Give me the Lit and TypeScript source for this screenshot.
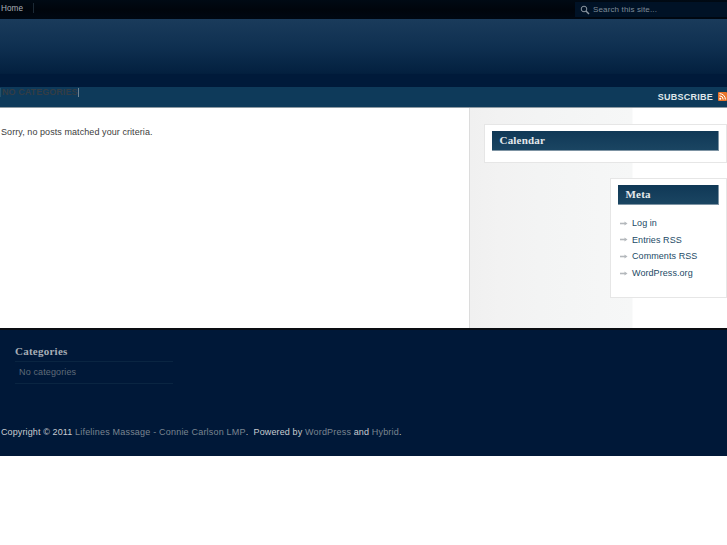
import { LitElement, html, css } from "lit";
import { customElement } from "lit/decorators.js";

@customElement("app-root")
export class AppRoot extends LitElement {
  static styles = css`
    :host { display: block; width: 727px; height: 545px; background: #fff; overflow: hidden; font-family: "Liberation Sans", Arial, sans-serif; font-size: 9px; letter-spacing: 0.07px; color: #444; }
    a { color: inherit; text-decoration: none; }
    .top { height: 19px; display: flex; justify-content: space-between; background: linear-gradient(#000a14, #00050c 50%, #000812); }
    .home { display: flex; align-items: center; padding-left: 1px; color: #a8b0b8; width: 34px; box-sizing: border-box; border-right: 1px solid #1c2a36; height: 10px; margin-top: 3px; font-size: 8.2px; }
    .search { width: 152px; height: 15px; margin-top: 2px; background: #001226; display: flex; align-items: center; gap: 3px; padding-left: 5px; box-sizing: border-box; color: #7f8c98; font-size: 8px; letter-spacing: 0.14px; }
    .head { height: 68px; background: linear-gradient(#1a3b5b, #0f3051 40%, #03203f 80%, #001a3a 81%, #001a3a); }
    .nav { height: 20px; background: #0e3a5a; border-bottom: 1px solid #8d9aa3; display: flex; justify-content: space-between; }
    .cats { margin-top: 1px; padding-left: 1px; height: 9px; line-height: 9px; font-size: 9px; font-weight: bold; letter-spacing: 0.05px; color: #333d45; border-right: 1px solid #6f8493; border-left: 1px solid #235069; align-self: flex-start; }
    .sub { display: flex; align-items: center; gap: 5px; color: #dfe6ea; font-weight: bold; font-size: 9px; letter-spacing: 0.25px; padding-bottom: 1px; }
    .main { height: 220px; display: flex; }
    .content { width: 469px; padding: 19px 0 0 1px; box-sizing: border-box; color: #3c3c3c; }
    .side { flex: 1; display: flex; flex-direction: column; align-items: flex-end; gap: 15px; padding-top: 16px; box-sizing: border-box;
      background: linear-gradient(90deg, #dcdcdc 0, #dcdcdc 1px, #f0f0f0 1px, #f2f2f2 30px, #f3f4f4 70px, #f6f7f7 163px, #fff 164px); }
    .w { background: #fff; border: 1px solid #e6e6e6; padding: 6px 7px; box-sizing: border-box; }
    .cal { width: 243px; height: 39px; }
    .meta { width: 117px; height: 120px; }
    .title { height: 20px; box-sizing: border-box; background: linear-gradient(#103856, #1a4562); border: 1px solid #7d93a3; border-width: 0 1px 1px 0; font: bold 11px "Liberation Serif", serif; color: #e4e9ec; padding: 2.5px 0 0 7.5px; letter-spacing: 0.2px; }
    ul { list-style: none; margin: 10px 0 0; padding: 0; color: #224a66; }
    li { height: 16.6px; display: flex; align-items: center; gap: 4px; padding-left: 2px; letter-spacing: 0.07px; }
    .foot { height: 128px; background: #001838; border-top: 2px solid #0a0d12; box-sizing: border-box; color: #c4c8cc; display: flex; flex-direction: column; }
    .fw { margin: 15px 0 0 15px; width: 158px; }
    .fw h3 { margin: 0; font: bold 11px "Liberation Serif", serif; color: #a6adb5; height: 16px; letter-spacing: 0.25px; border-bottom: 1px solid #0a2542; }
    .fw p { margin: 0; height: 21px; line-height: 21px; padding-left: 4px; color: #5f6b78; border-bottom: 1px solid #0a2542; letter-spacing: 0.13px; }
    .copy { margin: 43px 0 0 1px; letter-spacing: 0.12px; color: #c8ccd0; white-space: pre; }
    .copy a { color: #7a8590; letter-spacing: 0.2px; }
  `;
  render() {
    const arrow = html`<svg width="8" height="5" viewBox="0 0 8 5"><path d="M0 2.5h5" stroke="#b4b8bc" stroke-width="1.6"/><path d="M4.5 .5l3 2-3 2z" fill="#b4b8bc"/></svg>`;
    return html`
      <div class="top">
        <div class="home"><a href="#">Home</a></div>
        <div class="search">
          <svg width="10" height="10" viewBox="0 0 10 10" fill="none" stroke="#8b96a0"><circle cx="4" cy="4" r="2.8"/><path d="M6 6l3 3" stroke-width="1.4"/></svg>
          <span>Search this site...</span>
        </div>
      </div>
      <div class="head"></div>
      <div class="nav">
        <div class="cats">NO CATEGORIES</div>
        <div class="sub">SUBSCRIBE
          <svg width="9" height="9" viewBox="0 0 9 9"><rect width="9" height="9" rx="1" fill="#e8742a"/><circle cx="2.2" cy="6.8" r="1" fill="#fff"/><path d="M1.5 3.8a3.7 3.7 0 0 1 3.7 3.7M1.5 1.6a5.9 5.9 0 0 1 5.9 5.9" stroke="#fff" fill="none"/></svg>
        </div>
      </div>
      <div class="main">
        <div class="content">Sorry, no posts matched your criteria.</div>
        <div class="side">
          <div class="w cal"><div class="title">Calendar</div></div>
          <div class="w meta">
            <div class="title">Meta</div>
            <ul>
              <li>${arrow}<a href="#">Log in</a></li>
              <li>${arrow}<a href="#">Entries RSS</a></li>
              <li>${arrow}<a href="#">Comments RSS</a></li>
              <li>${arrow}<a href="#">WordPress.org</a></li>
            </ul>
          </div>
        </div>
      </div>
      <div class="foot">
        <div class="fw"><h3>Categories</h3><p>No categories</p></div>
        <div class="copy">Copyright © 2011 <a href="#">Lifelines Massage - Connie Carlson LMP</a>.  Powered by <a href="#">WordPress</a> and <a href="#">Hybrid</a>.</div>
      </div>
    `;
  }
}
